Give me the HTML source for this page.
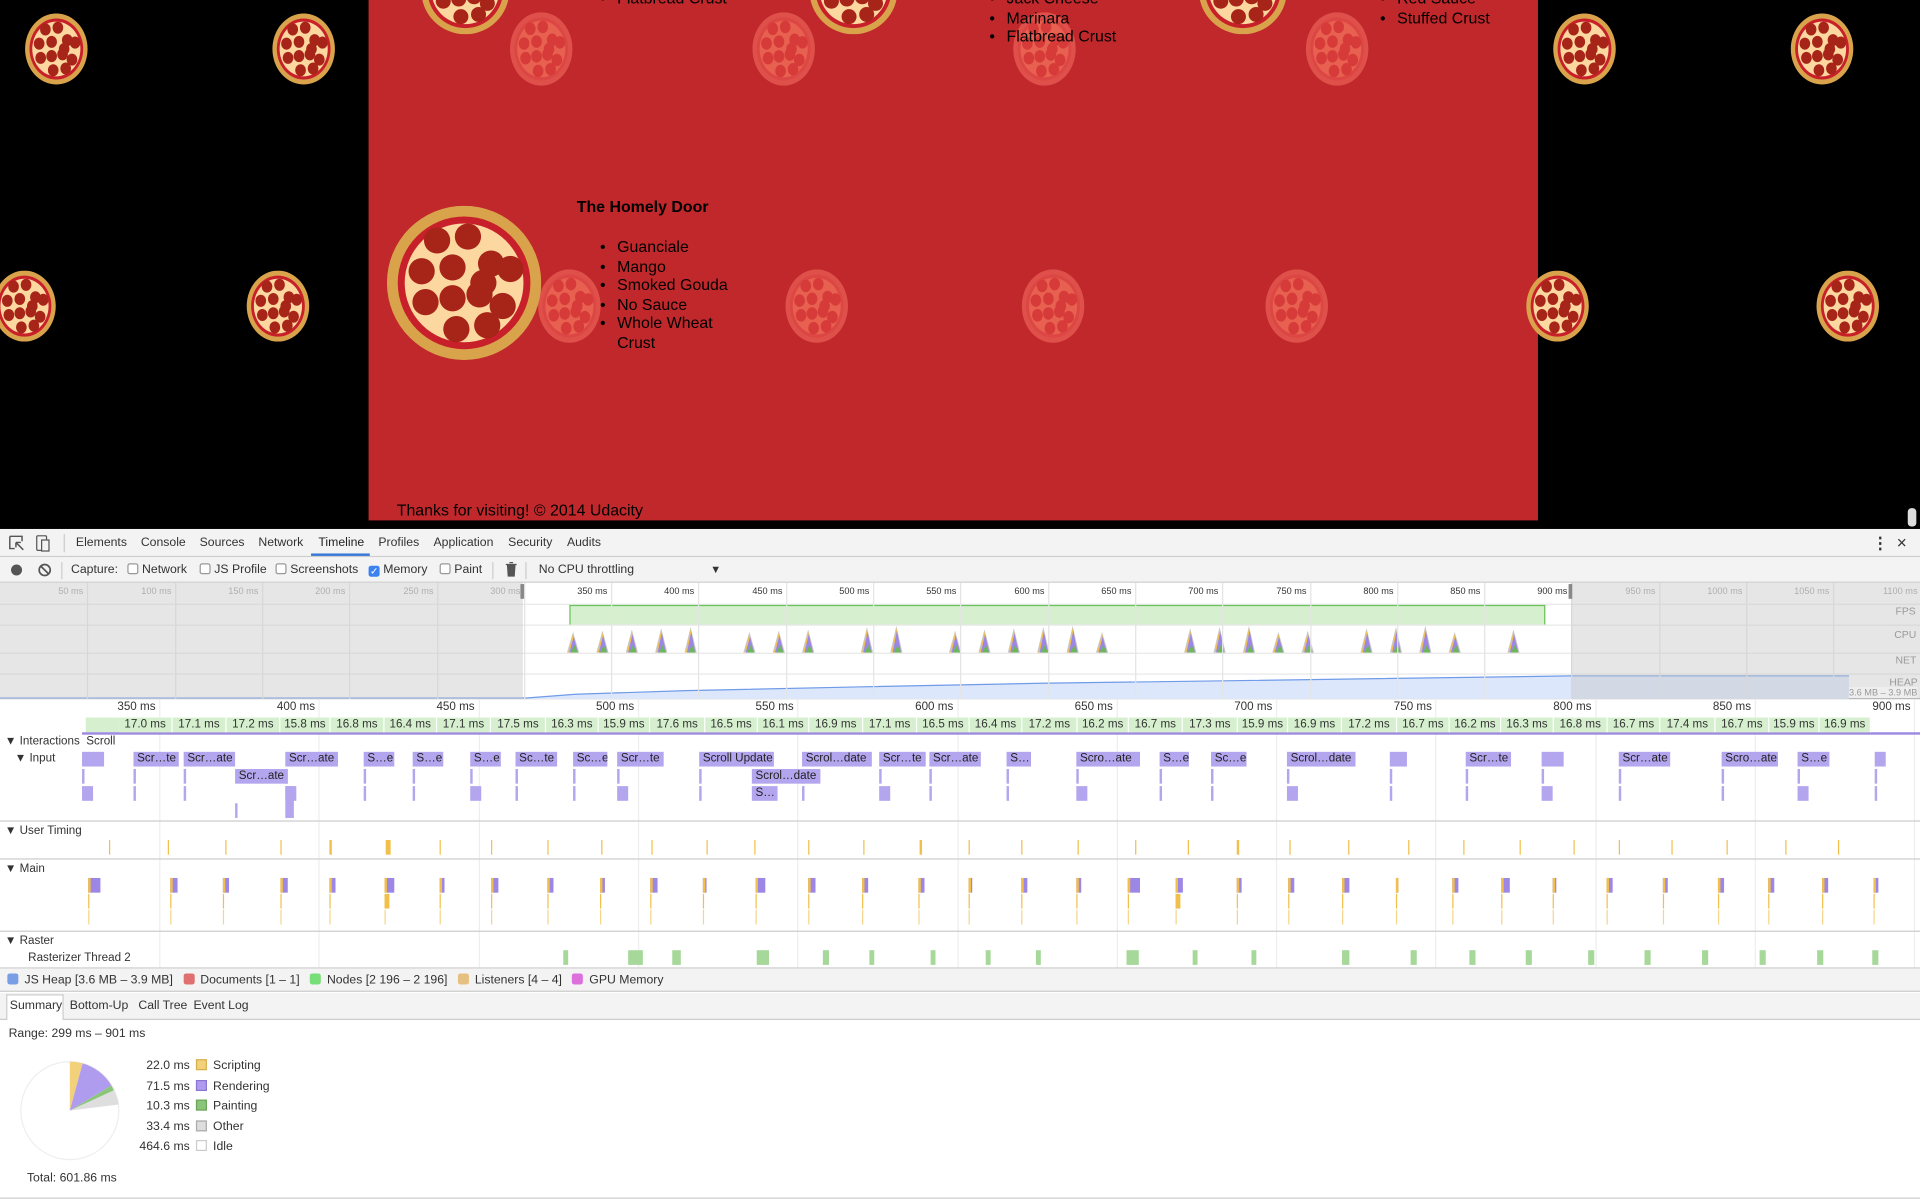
<!DOCTYPE html>
<html><head><meta charset="utf-8">
<style>
*{margin:0;padding:0;box-sizing:border-box}
html,body{width:1920px;height:1200px;overflow:hidden;background:#fff}
#w{position:absolute;left:0;top:0;width:1568px;height:980px;transform:scale(1.22449);transform-origin:0 0;font-family:"Liberation Sans",sans-serif;font-size:10px;color:#222}
.a{position:absolute}
.pg{font-family:"Liberation Sans","DejaVu Sans",sans-serif;font-size:13px;color:#000}
.dt{font-size:10px;color:#333;white-space:nowrap}
.sep{position:absolute;left:0;width:1568px;height:1px;background:#ccc}
.fr{position:absolute;top:586px;height:12px;background:#d6f0cf;border-right:1px solid #fff;font-size:9.5px;text-align:center;line-height:12px;color:#333;overflow:hidden;white-space:nowrap}
.ib{position:absolute;height:12px;background:#b4a6ee;font-size:9.5px;line-height:12px;padding-left:3px;color:#222;overflow:hidden;white-space:nowrap}
.cb{display:inline-block;width:9px;height:9px;border:1px solid #999;border-radius:2px;vertical-align:-1px;margin-right:3px;background:#fff}
.sw{display:inline-block;width:9px;height:9px;vertical-align:-1px;margin-right:5px}
</style></head><body>
<div id="w">
<div class="a" style="left:0;top:0;width:1568px;height:432px;background:#000"></div>
<div class="a" style="left:301px;top:0;width:955px;height:425px;background:#c0282b"></div>
<div id="pz"></div>
<div class="a pg" style="left:490px;top:-9px">•</div><div class="a pg" style="left:504px;top:-9px">Flatbread Crust</div>
<div class="a pg" style="left:808px;top:-9px;line-height:15.5px">•<br>•<br>•</div><div class="a pg" style="left:822px;top:-9px;line-height:15.5px">Jack Cheese<br>Marinara<br>Flatbread Crust</div>
<div class="a pg" style="left:1127px;top:-9px;line-height:15.5px">•<br>•</div><div class="a pg" style="left:1141px;top:-9px;line-height:15.5px">Red Sauce<br>Stuffed Crust</div>
<div class="a pg" style="left:471px;top:161px;font-weight:bold">The Homely Door</div>
<div class="a pg" style="left:490px;top:194px;line-height:15.5px">•<br>•<br>•<br>•<br>•</div>
<div class="a pg" style="left:504px;top:194px;line-height:15.5px">Guanciale<br>Mango<br>Smoked Gouda<br>No Sauce<br>Whole Wheat<br>Crust</div>
<div class="a pg" style="left:324px;top:409px">Thanks for visiting! © 2014 Udacity</div>
<div class="a" style="left:1558px;top:415px;width:7px;height:15px;background:#ddd;border-radius:3px"></div>

<div class="a" style="left:0;top:432px;width:1568px;height:23px;background:#f3f3f3;border-bottom:1px solid #ccc"></div>
<svg class="a" style="left:7px;top:437px" width="36" height="14"><path d="M1 1h10v4M1 1v10h4M6 6l6 6M6 6h4M6 6v4" stroke="#555" fill="none" stroke-width="1.2"/><rect x="23" y="0.5" width="8" height="12" rx="1" fill="none" stroke="#555"/><rect x="27" y="4" width="6" height="9" fill="#f3f3f3" stroke="#555"/></svg>
<div class="a" style="left:52px;top:436px;width:1px;height:15px;background:#ccc"></div>
<div class="a dt" style="left:62px;top:438px">Elements</div>
<div class="a dt" style="left:115px;top:438px">Console</div>
<div class="a dt" style="left:163px;top:438px">Sources</div>
<div class="a dt" style="left:211px;top:438px">Network</div>
<div class="a dt" style="left:260px;top:438px;color:#222">Timeline</div>
<div class="a" style="left:254px;top:452px;width:48px;height:2px;background:#3879d9"></div>
<div class="a dt" style="left:309px;top:438px">Profiles</div>
<div class="a dt" style="left:354px;top:438px">Application</div>
<div class="a dt" style="left:415px;top:438px">Security</div>
<div class="a dt" style="left:463px;top:438px">Audits</div>
<div class="a dt" style="left:1529px;top:436px;font-size:13px;font-weight:bold">⋮</div>
<div class="a dt" style="left:1549px;top:435px;font-size:14px">×</div>

<div class="a" style="left:0;top:455px;width:1568px;height:21px;background:#f3f3f3;border-bottom:1px solid #ccc"></div>
<div class="a" style="left:9px;top:461px;width:9px;height:9px;border-radius:50%;background:#555"></div>
<svg class="a" style="left:31px;top:460px" width="11" height="11"><circle cx="5.5" cy="5.5" r="4.5" stroke="#555" stroke-width="1.4" fill="none"/><path d="M2.3 2.3l6.4 6.4" stroke="#555" stroke-width="1.4"/></svg>
<div class="a" style="left:50px;top:459px;width:1px;height:14px;background:#ccc"></div>
<div class="a dt" style="left:58px;top:460px">Capture:</div>
<div class="a dt" style="left:104px;top:460px"><span class="cb"></span>Network</div>
<div class="a dt" style="left:163px;top:460px"><span class="cb"></span>JS Profile</div>
<div class="a dt" style="left:225px;top:460px"><span class="cb"></span>Screenshots</div>
<div class="a dt" style="left:301px;top:460px"><span class="cb" style="background:#3b82f0;border-color:#3b82f0;color:#fff;font-size:8px;line-height:8px;text-align:center">✓</span>Memory</div>
<div class="a dt" style="left:359px;top:460px"><span class="cb"></span>Paint</div>
<div class="a" style="left:402px;top:459px;width:1px;height:14px;background:#ccc"></div>
<svg class="a" style="left:413px;top:459px" width="9" height="12"><path d="M0 2h9M3 0.5h3M1.5 3h6l-.6 8.5h-4.8z" fill="#555" stroke="#555"/></svg>
<div class="a" style="left:429px;top:459px;width:1px;height:14px;background:#ccc"></div>
<div class="a dt" style="left:440px;top:460px">No CPU throttling</div>
<div class="a dt" style="left:580px;top:460px;font-size:9px">▼</div>

<div class="a" style="left:0;top:476px;width:1568px;height:95px;background:#fff;border-bottom:1px solid #aaa"></div>
<div class="a" style="left:0;top:493px;width:1568px;height:1px;background:#e8e8e8"></div>
<div class="a" style="left:0;top:510px;width:1568px;height:1px;background:#e8e8e8"></div>
<div class="a" style="left:0;top:533px;width:1568px;height:1px;background:#e8e8e8"></div>
<div class="a" style="left:0;top:550px;width:1568px;height:1px;background:#e8e8e8"></div>
<div class="a" style="left:465px;top:494px;width:797px;height:16px;background:#d6f0cf;border-top:1px solid #6ac25a;border-left:1px solid #6ac25a;border-right:1px solid #6ac25a"></div>
<svg class="a" style="left:0;top:550px" width="1568" height="21"><path d="M0 20 L430 20 L470 17 L560 14 L700 11 L850 8 L1000 6 L1283 2 L1510 2 L1510 21 L0 21Z" fill="#dde7fb"/><path d="M0 20 L430 20 L470 17 L560 14 L700 11 L850 8 L1000 6 L1283 2 L1510 2" stroke="#6f9be8" fill="none"/></svg>
<div id="cpu"></div>
<div id="ovg"></div>
<div class="a" style="left:0;top:476px;width:427px;height:95px;background:rgba(200,200,200,.45)"></div>
<div class="a" style="left:1283px;top:476px;width:285px;height:95px;background:rgba(200,200,200,.45)"></div>
<div class="a" style="left:425px;top:477px;width:3px;height:12px;background:#888"></div>
<div class="a" style="left:1281px;top:477px;width:3px;height:12px;background:#888"></div>
<div class="a dt" style="left:1548px;top:494px;font-size:8.5px;color:#999">FPS</div>
<div class="a dt" style="left:1547px;top:513px;font-size:8.5px;color:#999">CPU</div>
<div class="a dt" style="left:1548px;top:534px;font-size:8.5px;color:#999">NET</div>
<div class="a dt" style="left:1543px;top:552px;font-size:8.5px;color:#999">HEAP</div>
<div class="a dt" style="left:1510px;top:561px;font-size:7.5px;color:#999;background:#eee">3.6 MB – 3.9 MB</div>

<div id="fl"></div>
<div class="a" style="left:70px;top:586px;width:27px;height:12px;background:#d6f0cf"></div>
<div class="a" style="left:67px;top:598px;width:1501px;height:2px;background:#9d8ae0"></div>
<div class="a dt" style="left:4px;top:600px;font-size:9.5px">▼ Interactions&nbsp; Scroll</div>
<div class="a dt" style="left:12px;top:614px;font-size:9.5px">▼ Input</div>
<div class="sep" style="top:670px"></div>
<div class="a dt" style="left:4px;top:673px;font-size:9.5px">▼ User Timing</div>
<div class="sep" style="top:701px"></div>
<div class="a dt" style="left:4px;top:704px;font-size:9.5px">▼ Main</div>
<div class="sep" style="top:760px"></div>
<div class="a dt" style="left:4px;top:763px;font-size:9.5px">▼ Raster</div>
<div class="a dt" style="left:23px;top:777px;font-size:9.5px">Rasterizer Thread 2</div>
<div id="bars"></div>
<div class="sep" style="top:790px"></div>

<div class="fr" style="left:97px;width:44px">17.0 ms</div><div class="fr" style="left:141px;width:44px">17.1 ms</div><div class="fr" style="left:185px;width:44px">17.2 ms</div><div class="fr" style="left:229px;width:41px">15.8 ms</div><div class="fr" style="left:270px;width:44px">16.8 ms</div><div class="fr" style="left:314px;width:43px">16.4 ms</div><div class="fr" style="left:357px;width:44px">17.1 ms</div><div class="fr" style="left:401px;width:45px">17.5 ms</div><div class="fr" style="left:446px;width:43px">16.3 ms</div><div class="fr" style="left:489px;width:42px">15.9 ms</div><div class="fr" style="left:531px;width:45px">17.6 ms</div><div class="fr" style="left:576px;width:43px">16.5 ms</div><div class="fr" style="left:619px;width:42px">16.1 ms</div><div class="fr" style="left:661px;width:44px">16.9 ms</div><div class="fr" style="left:705px;width:44px">17.1 ms</div><div class="fr" style="left:749px;width:43px">16.5 ms</div><div class="fr" style="left:792px;width:43px">16.4 ms</div><div class="fr" style="left:835px;width:45px">17.2 ms</div><div class="fr" style="left:880px;width:42px">16.2 ms</div><div class="fr" style="left:922px;width:44px">16.7 ms</div><div class="fr" style="left:966px;width:45px">17.3 ms</div><div class="fr" style="left:1011px;width:41px">15.9 ms</div><div class="fr" style="left:1052px;width:44px">16.9 ms</div><div class="fr" style="left:1096px;width:45px">17.2 ms</div><div class="fr" style="left:1141px;width:43px">16.7 ms</div><div class="fr" style="left:1184px;width:42px">16.2 ms</div><div class="fr" style="left:1226px;width:43px">16.3 ms</div><div class="fr" style="left:1269px;width:44px">16.8 ms</div><div class="fr" style="left:1313px;width:43px">16.7 ms</div><div class="fr" style="left:1356px;width:45px">17.4 ms</div><div class="fr" style="left:1401px;width:44px">16.7 ms</div><div class="fr" style="left:1445px;width:41px">15.9 ms</div><div class="fr" style="left:1486px;width:42px">16.9 ms</div>

<div class="ib" style="left:67px;top:614px;width:18px"></div><div class="ib" style="left:109px;top:614px;width:37px">Scr…te</div><div class="ib" style="left:150px;top:614px;width:42px">Scr…ate</div><div class="ib" style="left:233px;top:614px;width:43px">Scr…ate</div><div class="ib" style="left:297px;top:614px;width:25px">S…e</div><div class="ib" style="left:337px;top:614px;width:25px">S…e</div><div class="ib" style="left:384px;top:614px;width:25px">S…e</div><div class="ib" style="left:421px;top:614px;width:34px">Sc…te</div><div class="ib" style="left:468px;top:614px;width:28px">Sc…e</div><div class="ib" style="left:504px;top:614px;width:38px">Scr…te</div><div class="ib" style="left:571px;top:614px;width:61px">Scroll Update</div><div class="ib" style="left:655px;top:614px;width:57px">Scrol…date</div><div class="ib" style="left:718px;top:614px;width:38px">Scr…te</div><div class="ib" style="left:759px;top:614px;width:42px">Scr…ate</div><div class="ib" style="left:822px;top:614px;width:20px">S…</div><div class="ib" style="left:879px;top:614px;width:52px">Scro…ate</div><div class="ib" style="left:947px;top:614px;width:24px">S…e</div><div class="ib" style="left:989px;top:614px;width:29px">Sc…e</div><div class="ib" style="left:1051px;top:614px;width:56px">Scrol…date</div><div class="ib" style="left:1135px;top:614px;width:14px"></div><div class="ib" style="left:1197px;top:614px;width:37px">Scr…te</div><div class="ib" style="left:1259px;top:614px;width:18px"></div><div class="ib" style="left:1322px;top:614px;width:42px">Scr…ate</div><div class="ib" style="left:1406px;top:614px;width:46px">Scro…ate</div><div class="ib" style="left:1468px;top:614px;width:26px">S…e</div><div class="ib" style="left:1531px;top:614px;width:9px"></div>
<div class="ib" style="left:192px;top:628px;width:43px">Scr…ate</div><div class="ib" style="left:614px;top:628px;width:56px">Scrol…date</div><div class="ib" style="left:614px;top:642px;width:21px">S…</div>

<div class="a" style="left:0;top:791px;width:1568px;height:19px;background:#f3f3f3;border-bottom:1px solid #ccc"></div>
<div class="a dt" style="left:6px;top:795px;font-size:10px"><span class="sw" style="background:#7a9ee6;border-radius:2px"></span>JS Heap [3.6 MB – 3.9 MB]&nbsp;&nbsp; <span class="sw" style="background:#e07070;border-radius:2px"></span>Documents [1 – 1]&nbsp;&nbsp; <span class="sw" style="background:#78de78;border-radius:2px"></span>Nodes [2 196 – 2 196]&nbsp;&nbsp; <span class="sw" style="background:#e6c080;border-radius:2px"></span>Listeners [4 – 4]&nbsp;&nbsp; <span class="sw" style="background:#dc70dc;border-radius:2px"></span>GPU Memory</div>
<div class="a" style="left:0;top:811px;width:1568px;height:22px;background:#f3f3f3;border-bottom:1px solid #ccc"></div>
<div class="a" style="left:5px;top:812px;width:47px;height:21px;background:#fff;border:1px solid #ccc;border-bottom:none"></div>
<div class="a dt" style="left:8px;top:816px;font-size:10px">Summary</div>
<div class="a dt" style="left:57px;top:816px;font-size:10px">Bottom-Up</div>
<div class="a dt" style="left:113px;top:816px;font-size:10px">Call Tree</div>
<div class="a dt" style="left:158px;top:816px;font-size:10px">Event Log</div>
<div class="a dt" style="left:7px;top:839px;font-size:10px">Range: 299 ms – 901 ms</div>
<svg class="a" style="left:16px;top:866px" width="82" height="82"><circle cx="41" cy="41" r="40" fill="#fff" stroke="#eee"/>
<path d="M41 41 L41 1 A40 40 0 0 1 51.5 2.4Z" fill="#f2d17a"/>
<path d="M41 41 L51.5 2.4 A40 40 0 0 1 75 20.5Z" fill="#b09cee"/>
<path d="M41 41 L75 20.5 A40 40 0 0 1 77 24.5Z" fill="#8bc57a"/>
<path d="M41 41 L77 24.5 A40 40 0 0 1 81 36Z" fill="#dedede"/></svg>
<div class="a dt" style="left:110px;top:863px;font-size:10px;line-height:16.5px;text-align:right;width:45px">22.0 ms<br>71.5 ms<br>10.3 ms<br>33.4 ms<br>464.6 ms</div>
<div class="a dt" style="left:160px;top:863px;font-size:10px;line-height:16.5px"><span class="sw" style="background:#f2d17a;border:1px solid #d6b050"></span>Scripting<br><span class="sw" style="background:#b09cee;border:1px solid #8a76d0"></span>Rendering<br><span class="sw" style="background:#8bc57a;border:1px solid #6aa55a"></span>Painting<br><span class="sw" style="background:#ddd;border:1px solid #aaa"></span>Other<br><span class="sw" style="background:#fff;border:1px solid #ccc"></span>Idle</div>
<div class="a dt" style="left:22px;top:957px;font-size:10px">Total: 601.86 ms</div>
<div class="sep" style="top:978px"></div>
</div>

<script>
function el(p,h){document.getElementById(p).insertAdjacentHTML('beforeend',h)}
function pizza(x,y,r,f,ratio){
 var c=f?['#e0504a','#dc4644','#e8604f','#d63b3a']:['#d9a34c','#c8202a','#fcd7a0','#a62418'];
 var rx=r*(ratio||0.88),pe=[[-.35,-.55],[.05,-.6],[-.55,-.15],[-.15,-.2],[.35,-.25],[.6,-.18],[-.5,.25],[-.15,.2],[.2,.15],[.5,.3],[-.1,.6],[.3,.55],[.25,-.0]];
 var s='<svg class="a" style="left:'+(x-r)+'px;top:'+(y-r)+'px" width="'+2*r+'" height="'+2*r+'"><ellipse cx="'+r+'" cy="'+r+'" rx="'+rx+'" ry="'+r+'" fill="'+c[0]+'"/><ellipse cx="'+r+'" cy="'+r+'" rx="'+rx*.86+'" ry="'+r*.86+'" fill="'+c[1]+'"/><ellipse cx="'+r+'" cy="'+r+'" rx="'+rx*.77+'" ry="'+r*.77+'" fill="'+c[2]+'"/>';
 pe.forEach(function(p){s+='<ellipse cx="'+(r+p[0]*rx)+'" cy="'+(r+p[1]*r)+'" rx="'+rx*.17+'" ry="'+r*.17+'" fill="'+c[3]+'"/>'});
 el('pz',s+'</svg>');}
[[442,40],[640,40],[853,40],[1092,40],[465,250],[667,250],[860,250],[1059,250]].forEach(function(p){pizza(p[0],p[1],30,1,0.85)});
[[46,40],[248,40],[20,250],[227,250],[1294,40],[1488,40],[1272,250],[1509,250]].forEach(function(p){pizza(p[0],p[1],29,0,0.88)});
[[380,-8],[697,-8],[1015,-8]].forEach(function(p){pizza(p[0],p[1],36,0,1)});
pizza(379,231,63,0,1);
var h='';
for(var k=1;k<=22;k++){var x=Math.round(k*50*1.426);h+='<div class="a" style="left:'+x+'px;top:476px;width:1px;height:95px;background:#e4e4e4"></div><div class="a dt" style="left:'+(x-40)+'px;top:478px;width:37px;text-align:right;font-size:7.5px;color:'+(k>=7&&k<=18?'#333':'#999')+'">'+(k*50)+' ms</div>';}
el('ovg',h);
h='';var i=0;
for(var x=467;x<1250;x+=24,i++){if(i%7==5||i%11==9)continue;var hh=17+(i*7%6);
 h+='<svg class="a" style="left:'+(x-4)+'px;top:'+(533-hh)+'px" width="14" height="'+hh+'"><path d="M0 '+hh+' L5 0 L10 '+hh+'Z" fill="#c8c8c8"/><path d="M1 '+hh+' L5 2 L9 '+hh+'Z" fill="#f2c04a"/><path d="M2 '+hh+' L5.5 4 L9 '+hh+'Z" fill="#9c86e6"/><path d="M3 '+hh+' L6 '+(hh-6)+' L9 '+hh+'Z" fill="#6ab85a"/></svg>';}
el('cpu',h);
h='';
for(var m=350;m<=900;m+=50){var x=130+(m-350)*2.606;h+='<div class="a" style="left:'+Math.round(x)+'px;top:571px;width:1px;height:219px;background:#eee"></div><div class="a dt" style="left:'+(x-50)+'px;top:572px;width:47px;text-align:right;font-size:9.5px">'+m+' ms</div>';}
el('fl',h);
h='';var xs=[67,109,150,233,297,337,384,421,468,504,571,655,718,759,822,879,947,989,1051,1135,1197,1259,1322,1406,1468,1531];
xs.forEach(function(x,i){h+='<div class="a" style="left:'+x+'px;top:628px;width:2px;height:12px;background:#b4a6ee"></div><div class="a" style="left:'+x+'px;top:642px;width:'+(i%3==0?9:2)+'px;height:12px;background:#b4a6ee"></div>';});
h+='<div class="a" style="left:233px;top:642px;width:7px;height:26px;background:#b4a6ee"></div><div class="a" style="left:192px;top:656px;width:2px;height:12px;background:#b4a6ee"></div>';
var ut=[89,137,184,229,269,315,359,401,447,491,532,577,616,660,705,751,791,834,880,927,970,1010,1053,1101,1150,1195,1241,1285,1322,1365,1410,1458,1501];
ut.forEach(function(x,i){h+='<div class="a" style="left:'+x+'px;top:686px;width:'+(i==5?4:i==4||i==15||i==21?2:1)+'px;height:12px;background:#f2c04a"></div>';});
var mn=[72,139,182,229,269,314,359,401,447,490,531,574,617,660,704,750,791,834,879,921,960,1010,1052,1096,1140,1186,1226,1268,1312,1358,1403,1444,1488,1530];
mn.forEach(function(x,i){var w=[10,6,5,6,5,8,4,6,5,4,6,3,8,6,5,5,3,5,4,10,6,4,5,6,1,5,7,3,5,4,5,5,5,4][i];
 h+='<div class="a" style="left:'+x+'px;top:717px;width:'+w+'px;height:12px;background:#9c86e6;border-left:2px solid #f2c04a"></div><div class="a" style="left:'+x+'px;top:730px;width:'+(i==5||i==20?4:1)+'px;height:12px;background:#f2c04a"></div><div class="a" style="left:'+x+'px;top:743px;width:1px;height:12px;background:#f5d58a"></div>';});
[[460,4],[513,12],[549,7],[618,10],[672,5],[710,4],[760,4],[805,4],[846,4],[920,10],[974,4],[1022,4],[1096,6],[1152,5],[1200,5],[1246,5],[1297,5],[1343,5],[1390,5],[1437,5],[1484,5],[1529,5]].forEach(function(p){h+='<div class="a" style="left:'+p[0]+'px;top:776px;width:'+p[1]+'px;height:12px;background:#a6d89a"></div>';});
el('bars',h);
</script>
</body></html>
